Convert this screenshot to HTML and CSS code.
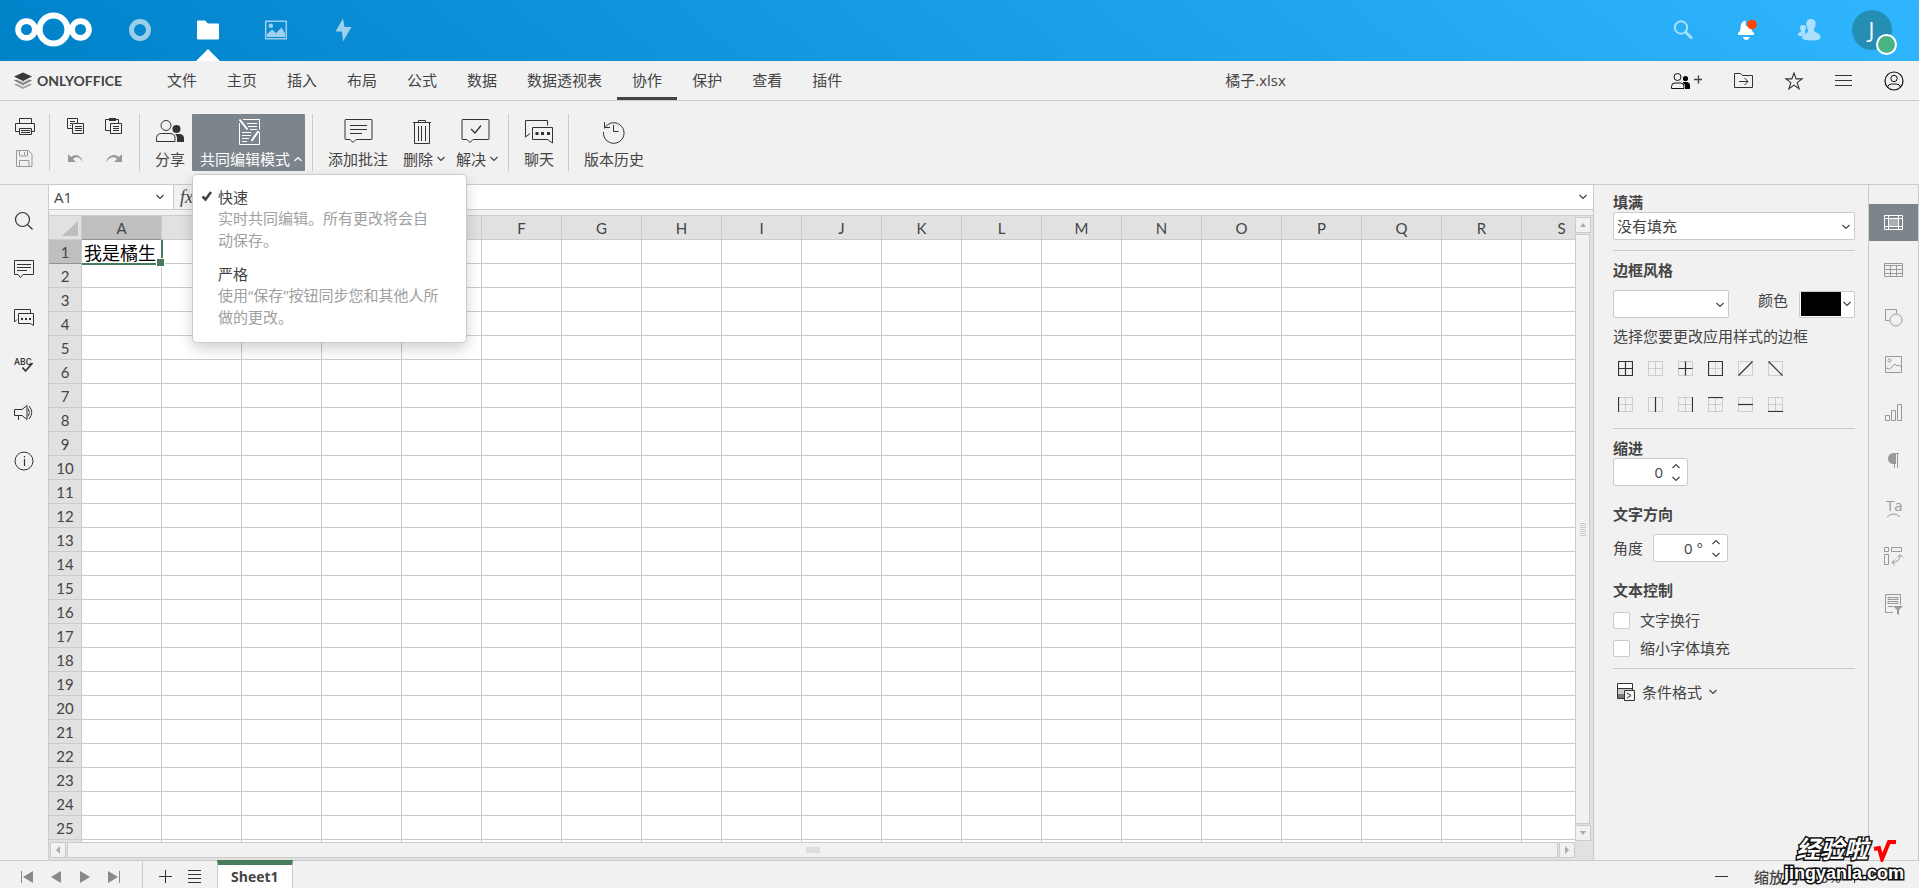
FILE: index.html
```html
<!DOCTYPE html>
<html lang="zh-CN">
<head>
<meta charset="utf-8">
<meta name="viewport" content="width=device-width, initial-scale=1">
<title>橘子.xlsx</title>
<link rel="stylesheet" href="styles.css">
</head>
<body>
<header class="cloud-bar">
  <a class="cloud-logo" href="#" aria-label="首页">
    <svg width="78" height="36" viewBox="0 0 78 36" fill="none" stroke="#fff" stroke-width="6.2"><circle cx="38.5" cy="17.5" r="14"/><circle cx="11.500" cy="17.500" r="8.400" stroke-width="5.800"/><circle cx="65.500" cy="17.500" r="8.400" stroke-width="5.800"/></svg>
  </a>
  <nav class="cloud-apps">
    <a class="cloud-app" href="#" aria-label="仪表盘"><svg width="24" height="24" fill="none" stroke="#fff" stroke-width="5"><circle cx="12" cy="12" r="8.500"/></svg></a>
    <a class="cloud-app current" href="#" aria-label="文件"><svg width="24" height="24" fill="#fff"><path d="M1 3.500q0-1 1-1h7l3 3h10q1 0 1 1v14q0 1-1 1H2q-1 0-1-1z"/></svg></a>
    <a class="cloud-app" href="#" aria-label="照片"><svg width="24" height="24"><path fill="none" stroke="#fff" stroke-width="1.500" d="M1.700 3.200h20.600v17.600H1.700z"/><circle cx="6.800" cy="7.800" r="2.300" fill="#fff"/><path fill="#fff" d="M3 19v-3l5-4.500 4 3.500 5.500-5.500L21 15v4z"/></svg></a>
    <a class="cloud-app" href="#" aria-label="动态"><svg width="24" height="24" fill="#fff"><path d="M11 .500 3.500 13.500h6.500L11 23.500l8.500-14.500h-7z"/></svg></a>
  </nav>
  <div class="cloud-tools">
    <button class="cloud-tool dim" aria-label="搜索"><svg width="24" height="24" fill="none" stroke="#fff"><circle cx="10" cy="9.500" r="6.200" stroke-width="2"/><path d="M14.500 14 21 20.500" stroke-width="2.800"/></svg></button>
    <button class="cloud-tool" aria-label="通知"><svg width="24" height="24"><path fill="#fff" d="M11.500 2.500c-4 1-5 4-5 8q0 3-2.500 4.500v2h16v-2q-2.500-1.500-2.500-4.500V9L12 8zM9 19h6.500c-.500 4-6 4-6.500 0z"/><circle cx="18" cy="6.500" r="4.800" fill="#ff4402"/></svg></button>
    <button class="cloud-tool dim" aria-label="联系人"><svg width="24" height="24" fill="#fff"><path d="M14 1c3.500 0 5 2.500 4.600 6-.3 2.500-1.600 3-1.600 5.500 0 2 6.500 2.500 6.500 6.500 0 2.500-3 3.500-9 3.500S5 21.500 5 19.500c0-3 6-3.500 6-6.500 0-2-1.300-3.500-1.600-6C9 3.500 10.500 1 14 1zM6 7c2 0 3 1.200 2.900 3-.1 1.500-.9 2-.9 3.500S9 15 8 16l-3 2c-3 0-4-.500-4-1.800C1 14.500 4 14.500 4 13c0-1-.800-1.500-.900-3C3 8.200 4 7 6 7z"/></svg></button>
    <button class="cloud-tool" aria-label="账户 J"><span class="avatar">J<span class="online"></span></span></button>
  </div>
</header>

<div class="tab-bar">
  <a class="brand" href="#">
    <svg width="20" height="18" viewBox="0 0 20 18"><path fill="#a0a0a0" d="m1 12.500 3-1.200 6 2.500 6-2.500 3 1.200-9 4.500z"/><path fill="#f1f1f1" d="m1 9.500 9 4.500 9-4.500v1l-9 4.500-9-4.500z"/><path fill="#777" d="m1 8.500 3-1.200 6 2.500 6-2.500 3 1.200-9 4.500z"/><path fill="#f1f1f1" d="m1 5.500 9 4.500 9-4.500v1l-9 4.500-9-4.500z"/><path fill="#3a3a3a" d="m1 4.500 9-4 9 4-9 4.500z"/></svg>
    <span>ONLYOFFICE</span>
  </a>
  <nav class="tabs">
    <a href="#">文件</a><a href="#">主页</a><a href="#">插入</a><a href="#">布局</a><a href="#">公式</a><a href="#">数据</a><a href="#">数据透视表</a><a class="current" href="#">协作</a><a href="#">保护</a><a href="#">查看</a><a href="#">插件</a>
  </nav>
  <div class="doc-title">橘子.xlsx</div>
  <div class="doc-tools">
    <button class="wide" aria-label="共享"><svg width="32" height="20" fill="none" stroke="#111"><circle cx="6.500" cy="6" r="3.500"/><path d="M.500 17.500v-2q0-3.500 3.500-3.500h5.500q3.500 0 3.500 3.500v2z"/><path fill="#000" stroke="none" d="M14.500 5a2.600 2.600 0 1 1 0 5.200 2.600 2.600 0 0 1 0-5.200zM12 11h4q3 .500 3 3.500V18h-5v-3q0-2-2-3z"/><path stroke="#444" d="M23 8.500h8M27.500 4.500v8" stroke-width="1.400"/></svg></button>
    <button aria-label="打开文件位置"><svg width="20" height="18" fill="none" stroke="#333"><path d="M.500 15.500v-14h6l2 2h10v12zM5 9.500h9M10.500 6l3.500 3.500-3.500 3.500"/></svg></button>
    <button aria-label="收藏"><svg width="20" height="20" fill="none" stroke="#333" stroke-width="1.100"><path d="m10 2 2.100 5.900h6l-4.900 3.700 1.900 6.200-5.100-3.700-5.100 3.700 1.900-6.200-4.900-3.700h6z"/></svg></button>
    <button aria-label="菜单"><svg width="18" height="14" stroke="#333"><path d="M0 1.500h17M0 6.500h17M0 11.500h17"/></svg></button>
    <button aria-label="用户"><svg width="20" height="20" fill="none" stroke="#111"><circle cx="10" cy="10" r="9" stroke-width="1.200"/><circle cx="10" cy="7.500" r="3.200"/><path d="M3.500 16q1-3 4-3h5q3 0 4 3"/></svg></button>
  </div>
</div>

<div class="toolbar">
  <div class="tool-grid single">
    <button aria-label="打印"><svg width="20" height="18" fill="none" stroke="#333"><path d="M4.500 5V.500h12V5M4.500 13.500h-4v-8h19v8h-4M4.500 10.500h12v6h-12zM6 12.500h9M6 14.500h9"/></svg></button>
    <button aria-label="保存"><svg width="18" height="18" fill="none" stroke="#999"><path d="M.500.500h12l3.500 3.500v12.500H.500zM3.500 1v5h8V1M8.500 2v3M3.500 16.500v-6h9.500v6"/></svg></button>
  </div>
  <div class="sep"></div>
  <div class="tool-grid">
    <button aria-label="复制"><svg width="18" height="18" fill="none" stroke="#333"><path d="M5 10.500H.500V.500h10V5M3 3.500h5M3 5.500h2M3 7.500h1M5.500 5.500h11v10h-11zM8 8.500h7M8 10.500h7M8 12.500h7"/></svg></button>
    <button aria-label="粘贴"><svg width="18" height="18" fill="none" stroke="#333"><path d="M5 12.500H.500v-11H4M10 1.500h3.500V5M5.500 5.500h11v10h-11zM8 8.500h6M8 10.500h6M8 12.500h6"/><path fill="#333" stroke="none" d="M4 0h7v3H4z"/></svg></button>
    <button aria-label="撤销"><svg width="18" height="12" fill="#999"><path d="M1 1v8h8L6 6c3-3 7-2 10 3C14 2 8 0 4 4z"/></svg></button>
    <button aria-label="重做"><svg width="18" height="12" fill="#999"><path d="M17 1v8H9l3-3C9 3 5 4 1 9 3 2 10 0 14 4z"/></svg></button>
  </div>
  <div class="sep"></div>
  <button class="tool"><svg width="28" height="28" fill="none" stroke="#333"><circle cx="10" cy="7.500" r="5"/><path d="M.500 23.500v-3q0-5 5-5h8.500q5 0 5 5v3z"/><path fill="#333" stroke="none" d="M20.500 7a4 4 0 1 1 0 8 4 4 0 0 1 0-8zM19 16h5q4 .500 4 4.500V24h-7v-4q0-2.500-2-4z"/></svg><span>分享</span></button>
  <div class="menu-anchor">
    <button class="tool drop active" aria-haspopup="true" aria-expanded="true"><svg width="28" height="28" fill="none" stroke="#fff"><path d="M8 1.500h16.500v10M4.500 5v21.500h20V14M12 5.500h10M13 8.500h9M15 11.500h7M7 14.500h9M7 17.500h9M7 20.500h7M7 23.500h5"/><path stroke-width="2" d="m4.500 1.500 8 10M23.500 13l-7 10"/></svg><span>共同编辑模式<svg class="caret" width="8" height="8" fill="none" stroke="#fff" stroke-width="1.200"><path d="M.500 6 4 2.500 7.500 6"/></svg></span></button>
    <ul class="menu" role="menu">
      <li><button role="menuitemradio" aria-checked="true"><svg class="tick" width="12" height="12" fill="none" stroke="#444" stroke-width="2.600"><path d="m1.500 6.500 3 3L10 2"/></svg><strong>快速</strong><span>实时共同编辑。所有更改将会自动保存。</span></button></li>
      <li><button role="menuitemradio" aria-checked="false"><strong>严格</strong><span>使用“保存”按钮同步您和其他人所做的更改。</span></button></li>
    </ul>
  </div>
  <div class="sep"></div>
  <button class="tool"><svg width="30" height="28" fill="none" stroke="#333"><path d="M2.500 1.500h26q.500 0 .500.500v19q0 .500-.500.500H13l-3 3-3-3H2.500q-.500 0-.500-.500V2q0-.500.500-.500zM7 7.500h17M7 11.500h17M7 15.500h12"/></svg><span>添加批注</span></button>
  <button class="tool drop"><svg width="28" height="28" fill="none" stroke="#333"><path d="M5 4.500h18M10.500 4V2.500h7V4M6.500 5v20.500h15V5M10.500 8v15M13.500 8v15M17.500 8v15"/></svg><span>删除<svg class="caret" width="8" height="8" fill="none" stroke="#444" stroke-width="1.200"><path d="M.500 2 4 5.500 7.500 2"/></svg></span></button>
  <button class="tool drop"><svg width="30" height="28" fill="none" stroke="#333"><path d="M2.500 1.500h26q.500 0 .500.500v19q0 .500-.500.500H13l-3 3-3-3H2.500q-.500 0-.500-.500V2q0-.500.500-.500z"/><path d="m11 11 4 4 6-7.500" stroke-width="1.300"/></svg><span>解决<svg class="caret" width="8" height="8" fill="none" stroke="#444" stroke-width="1.200"><path d="M.500 2 4 5.500 7.500 2"/></svg></span></button>
  <div class="sep"></div>
  <button class="tool"><svg width="30" height="28" fill="none" stroke="#333"><path d="M6 15.500 1.500 19V2.500h22v5M8.500 9.500h20V25l-5-3.500h-15z"/><path fill="#333" stroke="none" d="M11.500 14h3v3h-3zM17 14h3v3h-3zM23 14h3v3h-3z"/></svg><span>聊天</span></button>
  <div class="sep"></div>
  <button class="tool"><svg width="28" height="28" fill="none" stroke="#333"><path d="M4.500 10.500A10.300 10.300 0 1 1 3.500 14M4.500 4v5.500H10M13.500 7v6.500h5"/></svg><span>版本历史</span></button>
</div>

<main class="workspace">
  <nav class="side-left">
    <button aria-label="查找"><svg width="20" height="20" fill="none" stroke="#333"><circle cx="8.500" cy="8.500" r="7" stroke-width="1.200"/><path d="m13.500 13.500 5 5" stroke-width="1.300"/></svg></button>
    <button aria-label="批注"><svg width="20" height="20" fill="none" stroke="#333"><path d="M.500 1.500h19v14H9l-2.500 3-2.500-3H.500zM3 5.500h14M3 8.500h14M3 11.500h10"/></svg></button>
    <button aria-label="聊天"><svg width="20" height="20" fill="none" stroke="#333"><path d="M3 12.500.500 15V2.500h16v4M4.500 6.500h15v12l-3-2h-12z"/><path fill="#333" stroke="none" d="M7 11h2v2H7zM11 11h2v2h-2zM15 11h2v2h-2z"/></svg></button>
    <button aria-label="拼写检查"><svg width="20" height="20"><text x="0" y="10" class="abc">ABC</text><path fill="none" stroke="#333" stroke-width="1.800" d="m8.500 12.500 3 3.500 7-8"/></svg></button>
    <button aria-label="反馈"><svg width="20" height="20" fill="none" stroke="#333"><path d="M.500 6.500H8l5-4v14l-5-4H.500zM4.500 13v4M14 5.500q3 4 0 8M15 3q5.500 6.500 0 13"/></svg></button>
    <button aria-label="关于"><svg width="20" height="20" fill="none" stroke="#333"><circle cx="10" cy="10" r="9"/><path d="M10.500 8v7M10.500 5v1.500" stroke-width="1.200"/></svg></button>
  </nav>

  <section class="sheet">
    <div class="formula-bar">
      <div class="name-box"><input type="text" value="A1" aria-label="名称框"><button aria-label="名称列表"><svg class="chev" width="8" height="6"><path d="m.500 1 3.500 3.500L7.500 1"/></svg></button></div>
      <button class="fx" aria-label="插入函数">fx</button>
      <input class="formula" type="text" aria-label="编辑栏">
      <button class="expand" aria-label="展开编辑栏"><svg class="chev" width="8" height="6"><path d="m.500 1 3.500 3.500L7.500 1"/></svg></button>
    </div>
    <div class="grid-frame">
      <div class="grid-view"><table class="grid" id="grid"></table></div>
      <div class="scroll vertical">
        <button aria-label="向上滚动"><svg width="8" height="6" fill="#aaa"><path d="m1 5 3-4 3 4z"/></svg></button>
        <div class="thumb"><i></i></div>
        <button aria-label="向下滚动"><svg width="8" height="6" fill="#aaa"><path d="m1 1 3 4 3-4z"/></svg></button>
      </div>
      <div class="scroll horizontal">
        <button aria-label="向左滚动"><svg width="6" height="8" fill="#aaa"><path d="M5 0 1 4l4 4z"/></svg></button>
        <div class="thumb"><i></i></div>
        <button aria-label="向右滚动"><svg width="6" height="8" fill="#aaa"><path d="m1 0 4 4-4 4z"/></svg></button>
      </div>
    </div>
  </section>

  <aside class="panel">
    <label class="heading" for="fill">填满</label>
    <div class="select"><select id="fill"><option>没有填充</option></select><svg class="chev" width="8" height="6"><path d="m.500 1 3.500 3.500L7.500 1"/></svg></div>
    <hr>
    <label class="heading" for="line">边框风格</label>
    <div class="row style-row">
      <div class="select short"><select id="line"><option></option></select><svg class="chev" width="8" height="6"><path d="m.500 1 3.500 3.500L7.500 1"/></svg></div>
      <span class="color-label" id="color-label">颜色</span>
      <button class="color" aria-labelledby="color-label"><i></i><svg class="chev" width="8" height="6"><path d="m.500 1 3.500 3.500L7.500 1"/></svg></button>
    </div>
    <p class="hint">选择您要更改应用样式的边框</p>
    <div class="borders" id="borders"></div>
    <hr>
    <label class="heading" for="indent">缩进</label>
    <div class="spinner"><input id="indent" type="text" value="0"><div><button aria-label="增加缩进"><svg class="chev" width="8" height="6"><path d="M.500 5 4 1.500 7.500 5"/></svg></button><button aria-label="减少缩进"><svg class="chev" width="8" height="6"><path d="m.500 1 3.500 3.500L7.500 1"/></svg></button></div></div>
    <h2 class="heading apart">文字方向</h2>
    <div class="row angle-row"><label for="angle">角度</label>
    <div class="spinner"><input id="angle" type="text" value="0 °"><div><button aria-label="增加角度"><svg class="chev" width="8" height="6"><path d="M.500 5 4 1.500 7.500 5"/></svg></button><button aria-label="减少角度"><svg class="chev" width="8" height="6"><path d="m.500 1 3.500 3.500L7.500 1"/></svg></button></div></div></div>
    <h2 class="heading apart">文本控制</h2>
    <label class="check"><input type="checkbox">文字换行</label>
    <label class="check"><input type="checkbox">缩小字体填充</label>
    <hr>
    <button class="conditional"><svg width="18" height="18" fill="none" stroke="#333"><path fill="#fff" stroke="none" d="M1 1h14v5H1z"/><path fill="#ccc" stroke="none" d="M1 6h14v5H1z"/><path fill="#777" stroke="none" d="M1 11h6v4H1z"/><path d="M.500.500h15v15H.500zM.500 5.500h15"/><path fill="#f1f1f1" d="M7.500 7.500h10v10h-10z"/><path d="m10 10 4 2.500-4 2.500"/></svg>条件格式<svg class="chev" width="8" height="6"><path d="m.500 1 3.500 3.500L7.500 1"/></svg></button>
  </aside>

  <nav class="side-right">
    <div class="side-stack">
    <button class="current" aria-label="单元格设置"><svg width="20" height="16" fill="none" stroke="#fff"><path d="M.500.500h18v14H.500zM.500 3.500h18M.500 11.500h18M4.500.500v14M14.500.500v14"/><path fill="#a9b0b6" stroke="#fff" d="M4.500 3.500h10v8h-10z"/></svg></button>
    <button aria-label="表格设置"><svg width="20" height="16" fill="none" stroke="#999"><path d="M.500 1.500h18v13H.500zM.500 3.500h18M.500 7.500h18M.500 11.500h18M6.500 3v11M12.500 3v11"/></svg></button>
    <button aria-label="形状设置"><svg width="18" height="18" fill="none" stroke="#999"><path d="M4 11.500H.500V.500h11V4"/><circle cx="11" cy="11" r="6"/></svg></button>
    <button aria-label="图片设置"><svg width="18" height="18" fill="none" stroke="#999"><path d="M.500.500h16v16H.500zM1 12l3.500 1L10 8l2 2 2-1 2.500 2.500"/><circle cx="4.500" cy="4.500" r="1.500"/></svg></button>
    <button aria-label="图表设置"><svg width="18" height="18" fill="none" stroke="#999"><path d="M.500 11.500h4v5h-4zM6.500 6.500h4v10h-4zM12.500.500h4v16h-4z"/></svg></button>
    <button aria-label="段落设置"><svg width="14" height="18"><path fill="#999" d="M12 1v1H9v10H6.500a5 5 0 0 1 0-11z"/><path stroke="#999" d="M7.500 2v14M10.500 2v14"/></svg></button>
    <button aria-label="文字艺术设置"><svg width="20" height="22"><text x="2" y="14" class="text-art">Ta</text><path fill="none" stroke="#999" d="M3 20q6.500-6 13 0"/></svg></button>
    <button aria-label="数据透视表设置"><svg width="20" height="20" fill="none" stroke="#999"><path d="M.500 1.500h4v4h-4zM7.500 1.500h10v4h-10zM.500 8.500h4v10h-4zM8 16.500q8 0 8-7.500M11 13.500l-3 3 3 3M13 11.500l3-3 3 3"/></svg></button>
    <button aria-label="切片器设置"><svg width="20" height="22" fill="none" stroke="#999"><path d="M9 19.500H1.500v-18h15V12M4 4.500h10v2H4zM4 8.500h10v2H4zM4 13.500h5"/><path fill="#999" stroke="none" d="M9 13h10l-4 4v5l-2-1v-4z"/></svg></button>
    </div>
  </nav>
</main>

<footer class="status">
  <div class="sheet-nav">
    <button aria-label="第一张工作表"><svg width="14" height="14"><path stroke="#888" d="M1.500 1v12"/><path fill="#888" d="M13 1v12L3 7z"/></svg></button>
    <button aria-label="上一张工作表"><svg width="12" height="14" fill="#888"><path d="M11 1v12L1 7z"/></svg></button>
    <button aria-label="下一张工作表"><svg width="12" height="14" fill="#888"><path d="M1 1v12l10-6z"/></svg></button>
    <button aria-label="最后一张工作表"><svg width="14" height="14"><path stroke="#888" d="M12.500 1v12"/><path fill="#888" d="M1 1v12l10-6z"/></svg></button>
  </div>
  <div class="sheet-tools">
    <button aria-label="添加工作表"><svg width="14" height="14" stroke="#333"><path d="M0 6.500h13M6.500 0v13"/></svg></button>
    <button aria-label="工作表列表"><svg width="14" height="14" stroke="#333"><path d="M0 .500h13M0 4.500h13M0 8.500h13M0 12.500h13"/></svg></button>
  </div>
  <button class="sheet-tab">Sheet1</button>
  <div class="zoom">
    <button aria-label="缩小"><svg width="14" height="14" stroke="#333"><path d="M0 6.500h13"/></svg></button>
    <button class="zoom-value">缩放为 100%</button>
    <button aria-label="放大"><svg width="14" height="14" stroke="#333"><path d="M0 6.500h13M6.500 0v13"/></svg></button>
  </div>
</footer>

<div class="watermark"><span class="mark-name">经验啦<svg width="26" height="24" fill="none" stroke="red" stroke-width="4"><path d="m2 11 5-1 3 11 7-17h7"/></svg></span><span class="mark-site">jingyanla.com</span></div>
<script src="script.js"></script>
</body>
</html>
```

FILE: styles.css
```css
* { box-sizing: border-box; }

:root {
  --line: #cbcbcb;
  --face: #f1f1f1;
  --text: #444;
  --accent: #7d858c;
  --green: #467b5b;
}

body {
  margin: 0;
  height: 100vh;
  display: flex;
  flex-direction: column;
  overflow: hidden;
  background: var(--face);
  color: var(--text);
  font: 15px/20px "Open Sans", "Noto Sans CJK SC", sans-serif;
}

button, input, select { font: inherit; color: inherit; }
button { padding: 0; border: 0; background: none; display: flex; align-items: center; justify-content: center; cursor: pointer; }
a { color: inherit; text-decoration: none; }
svg { display: block; flex: none; }
.chev { fill: none; stroke: #444; stroke-width: 1.2; }

/* Cloud header */
.cloud-bar { flex: none; height: 61px; display: flex; align-items: center; padding: 0 16px 2px 15px; background: linear-gradient(40deg, #0082c9 0%, #30b6ff 100%); }
.cloud-logo { width: 91px; }
.cloud-apps { display: flex; flex: 1; align-self: stretch; }
.cloud-app { width: 68px; display: flex; align-items: center; justify-content: center; position: relative; }
.cloud-app svg { opacity: .6; }
.cloud-app.current svg { opacity: 1; }
.cloud-app.current::after { content: ""; position: absolute; left: 22px; bottom: -2px; border: 12px solid transparent; border-top: 0; border-bottom-color: #fff; }
.cloud-tools { display: flex; }
.cloud-tool { width: 63px; height: 40px; }
.cloud-tool.dim svg { opacity: .6; }
.avatar { position: relative; width: 40px; height: 40px; border-radius: 50%; background: #248eb5; color: #fff; font-size: 22px; line-height: 38px; }
.online { position: absolute; right: -5px; bottom: -5px; width: 21px; height: 21px; border: 2px solid #fff; border-radius: 50%; background: #49b382; }

/* Tabs */
.tab-bar { flex: none; height: 40px; display: flex; border-bottom: 1px solid var(--line); }
.brand { width: 152px; padding-left: 13px; display: flex; align-items: center; gap: 4px; font: bold 14px/20px Lato, sans-serif; }
.tabs { display: flex; }
.tabs a { padding: 9px 15px 7px; border-bottom: 3px solid transparent; }
.tabs a.current { border-color: #444; }
.doc-title { flex: 1; text-align: center; padding-top: 9px; }
.doc-tools { display: flex; }
.doc-tools button { width: 50px; }
.doc-tools .wide { width: 65px; }

/* Toolbar */
.toolbar { flex: none; display: flex; padding: 13px 0; border-bottom: 1px solid var(--line); }
.sep { width: 1px; margin: 0 8px 0 7px; background: var(--line); }
.tool-grid { display: grid; grid-template-columns: 38px 38px; grid-template-rows: 25px 25px; gap: 7px 0; padding: 0 6px 0 0; }
.tool-grid.single { grid-template-columns: 34px; padding: 0 0 0 8px; }
.tool-grid + .sep { margin-right: 7px; }
.tool-grid:not(.single) + .sep { margin: 0 8px 0 0; }
.tool { flex-direction: column; justify-content: flex-start; height: 57px; padding: 4px 7px 0; gap: 2px; line-height: 22px; white-space: nowrap; }
.tool span { display: flex; align-items: center; gap: 4px; }
.tool.drop { padding: 4px 0 0; }
.tool.drop span { padding: 0 3px 0 8px; }
.tool.active { background: var(--accent); color: #fff; border-radius: 1px; }
.menu-anchor { position: relative; }
.menu { position: absolute; z-index: 5; top: 60px; left: 0; width: 275px; margin: 0; padding: 12px 25px; list-style: none; display: grid; gap: 13px; background: #fff; border: 1px solid var(--line); border-radius: 5px; box-shadow: 0 6px 14px rgba(0, 0, 0, .18); }
.menu li:last-child { padding-bottom: 2px; }
.menu button { display: block; position: relative; text-align: left; width: 222px; }
.menu strong { display: block; font-weight: normal; }
.menu span { display: block; color: #a0a0a0; line-height: 22px; }
.tick { position: absolute; left: -17px; top: 3px; }

/* Workspace */
.workspace { flex: 1; min-height: 0; display: flex; }
.side-left { flex: none; width: 48px; display: flex; flex-direction: column; padding-top: 18px; gap: 12px; }
.side-left button { height: 36px; width: 47px; }
.side-right { flex: none; width: 51px; padding-top: 19px; border-left: 1px solid var(--line); border-right: 1px solid var(--line); }
.side-stack { height: 418px; display: flex; flex-direction: column; justify-content: space-between; }
.side-stack button { height: 37px; }
.side-stack .current { background: var(--accent); }
.abc { font: 500 9px Roboto, sans-serif; fill: #333; }
.text-art { font: 15px "Open Sans", sans-serif; fill: #999; }

.sheet { flex: 1; min-width: 0; display: flex; flex-direction: column; border-left: 1px solid var(--line); }
.formula-bar { display: flex; height: 25px; border-bottom: 1px solid var(--line); background: #fff; }
.name-box { display: flex; width: 125px; border-right: 1px solid var(--line); }
.name-box input { flex: 1; min-width: 0; border: 0; padding: 0 5px; background: none; }
.name-box button { width: 26px; }
.fx { width: 30px; background: var(--face); border-right: 1px solid var(--line); font: italic 18px "Liberation Serif", serif; justify-content: flex-start; padding-left: 6px; }
.formula { flex: 1; min-width: 0; border: 0; background: none; }
.expand { width: 20px; }

.grid-frame { flex: 1; min-height: 0; margin-top: 5px; display: grid; grid-template-columns: minmax(0, 1fr) 18px; grid-template-rows: minmax(0, 1fr) 18px; border-top: 1px solid var(--line); background: #e1e1e1; }
.grid-view { overflow: hidden; background: #fff; }
.grid { table-layout: fixed; width: 1553px; border-collapse: separate; border-spacing: 0; font: 15px/22px Lato, sans-serif; }
.grid th, .grid td { height: 24px; padding: 0; border: solid var(--line); border-width: 0 1px 1px 0; overflow: hidden; }
.grid th { background: #e1e1e1; font-weight: normal; }
.grid .corner, .grid tbody th { width: 33px; }
.grid .corner svg { margin-left: 13px; margin-top: 2px; }
.grid th.selected { background: #bfbfbf; }
.grid thead th.selected, .grid tbody th.selected { border-bottom-color: #929292; }
.grid td.selected { position: relative; overflow: visible; color: #000; font: 18px/22px "Noto Sans CJK SC", sans-serif; white-space: nowrap; padding-left: 2px; }
.grid td.selected::before { content: ""; position: absolute; inset: 0 -2px -2px 0; border: solid var(--green); border-width: 0 2px 2px 0; }
.grid td.selected::after { content: ""; position: absolute; right: -4px; bottom: -4px; width: 7px; height: 7px; background: var(--green); border: 1px solid #fff; }

.scroll { display: flex; gap: 1px; }
.scroll button, .thumb { border: 1px solid var(--line); background: var(--face); }
.scroll button { width: 16px; height: 16px; flex: none; }
.thumb { flex: 1; display: flex; align-items: center; justify-content: center; }
.vertical { flex-direction: column; padding: 1px 3px 1px 0; }
.horizontal { padding: 0 0 2px 1px; }
.vertical i { width: 6px; height: 13px; background: repeating-linear-gradient(#cbcbcb 0 1px, transparent 1px 2px); }
.horizontal i { width: 14px; height: 6px; background: #dedede; }

/* Settings panel */
.panel { flex: none; width: 275px; padding: 7px 13px 0 19px; border-left: 1px solid var(--line); }
.heading { display: block; margin: 0; font-size: 15px; line-height: 20px; font-weight: bold; }
.heading.apart { margin: 18px 0 10px; }
.panel hr { height: 1px; margin: 10px 0 9px; border: 0; background: var(--line); }
.row { display: flex; align-items: center; }
.select { position: relative; height: 28px; }
.select select { appearance: none; width: 100%; height: 28px; padding: 0 3px; border: 1px solid var(--line); border-radius: 2px; background: #fff; }
.select .chev { position: absolute; right: 5px; top: 12px; pointer-events: none; }
.select.short { width: 116px; }
.style-row { margin: 10px 0 8px; }
.color-label { align-self: flex-start; margin-left: auto; margin-right: 11px; }
.color { width: 56px; height: 27px; padding-left: 1px; border: 1px solid var(--line); border-radius: 2px; background: #fff; justify-content: flex-start; gap: 2px; }
.color i { width: 40px; height: 24px; background: #000; }
.hint { margin: 0 0 8px; }
.borders { display: grid; grid-template-columns: repeat(6, 28px); grid-auto-rows: 28px; gap: 8px 2px; margin-left: -2px; }
.spinner { width: 75px; height: 28px; display: flex; border: 1px solid var(--line); border-radius: 2px; background: #fff; }
.spinner input { width: 49px; border: 0; padding: 0; text-align: right; background: none; }
.spinner div { flex: 1; display: flex; flex-direction: column; justify-content: center; align-items: center; padding-left: 2px; }
.spinner button { height: 13px; width: 20px; }
.angle-row { gap: 10px; }
.check { display: flex; align-items: center; gap: 10px; line-height: 20px; margin-bottom: 8px; }
.check input { appearance: none; width: 17px; height: 17px; margin: 0; border: 1px solid var(--line); border-radius: 2px; background: #fff; }
.conditional { margin: 12px 0 0 4px; height: 22px; gap: 7px; }

/* Status bar */
.status { flex: none; height: 28px; display: flex; border-top: 1px solid var(--line); }
.sheet-nav { width: 143px; padding: 5px 0 0 12px; display: flex; border-right: 1px solid var(--line); }
.sheet-nav button { width: 29px; height: 22px; }
.sheet-tools { width: 74px; padding: 5px 0 0 8px; display: flex; }
.sheet-tools button { width: 29px; height: 22px; }
.sheet-tab { margin-top: -1px; padding: 0 13px; border: solid var(--line); border-width: 0 1px; border-top: 5px solid var(--green); background: #fff; font-weight: bold; font-size: 14px; }
.zoom { margin-left: auto; padding: 5px 57px 0 0; display: flex; align-items: center; }
.zoom-value { padding: 0 7px 0 25px; font-weight: 500; }

.watermark { position: absolute; right: 15px; bottom: 5px; display: grid; color: #fff; font: bold 18px/20px "Liberation Sans", "Noto Sans CJK SC", sans-serif; -webkit-text-stroke: 3px #111; paint-order: stroke fill; }
.mark-name { display: flex; align-items: center; gap: 4px; justify-content: flex-end; padding-right: 6px; font-size: 24px; font-style: italic; line-height: 26px; }
```

FILE: script.js
```js
const COLUMNS = 19;
const ROWS = 26;

function buildGrid(table) {
  const head = table.createTHead().insertRow();
  const corner = document.createElement("th");
  corner.className = "corner";
  corner.innerHTML = '<svg width="17" height="16" fill="#bdbdbd"><path d="M16 0v15H0z"/></svg>';
  head.append(corner);
  for (let c = 0; c < COLUMNS; c++) {
    const th = document.createElement("th");
    th.scope = "col";
    th.textContent = String.fromCharCode(65 + c);
    if (c === 0) th.className = "selected";
    head.append(th);
  }
  const body = table.createTBody();
  for (let r = 1; r <= ROWS; r++) {
    const row = body.insertRow();
    const th = document.createElement("th");
    th.scope = "row";
    th.textContent = r;
    if (r === 1) th.className = "selected";
    row.append(th);
    for (let c = 0; c < COLUMNS; c++) {
      const cell = row.insertCell();
      if (r === 1 && c === 0) {
        cell.className = "selected";
        cell.textContent = "我是橘生";
      }
    }
  }
}

function buildBorders(box) {
  const frame = "M.5.5h14v14H.5z";
  const cross = "M7.5.5v14M.5 7.5h14";
  const kinds = [
    ["所有框线", frame + cross, true],
    ["无框线", "", true],
    ["内部框线", cross, true],
    ["外部框线", frame, true],
    ["上斜框线", "M.5 14.5 14.5.5", false],
    ["下斜框线", "M.5.5l14 14", false],
    ["左框线", "M.5 0v15", true],
    ["内部竖线", "M7.5 0v15", false],
    ["右框线", "M14.5 0v15", true],
    ["上框线", "M0 .5h15", true],
    ["内部横线", "M0 7.5h15", false],
    ["下框线", "M0 14.5h15", true],
  ];
  for (const [name, solid, inner] of kinds) {
    const button = document.createElement("button");
    button.setAttribute("aria-label", name);
    button.innerHTML =
      '<svg width="15" height="15" fill="none">' +
      `<path stroke="#aaa" stroke-dasharray="1 1" d="${frame}${inner ? cross : ""}"/>` +
      `<path stroke="#333" stroke-width="1.2" d="${solid}"/></svg>`;
    box.append(button);
  }
}

buildGrid(document.getElementById("grid"));
buildBorders(document.getElementById("borders"));
```
